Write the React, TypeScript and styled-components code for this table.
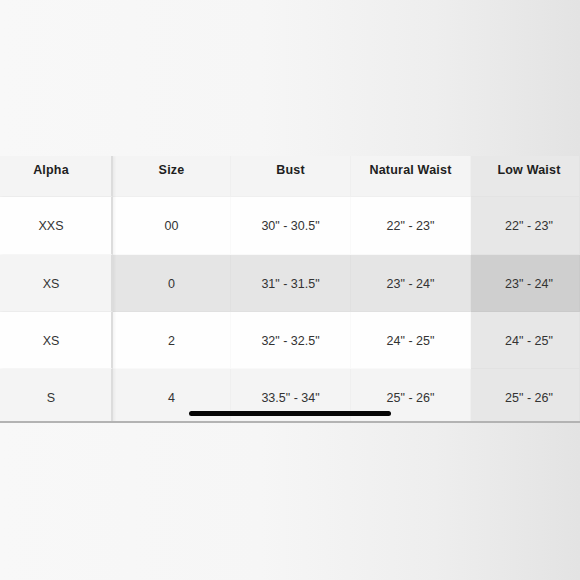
import { createGlobalStyle, styled } from "styled-components";

const GlobalStyle = createGlobalStyle`
  html, body {
    margin: 0;
    padding: 0;
  }
  body {
    font-family: "Liberation Sans", Arial, sans-serif;
  }
`;

const Screen = styled.div`
  width: 580px;
  height: 580px;
  overflow: hidden;
  background: linear-gradient(90deg, #f8f8f8 0%, #f6f6f6 45%, #eeeeee 75%, #e3e3e3 100%);
  padding-top: 156px;
  box-sizing: border-box;
`;

const TableWrap = styled.div`
  position: relative;
  width: 580px;
  height: 265px;
  overflow: hidden;
  border-bottom: 2px solid #b3b3b3;
`;

const Grid = styled.div`
  display: grid;
  grid-template-columns: 113px 118px 120px 120px 109px;
  grid-template-rows: 41px 58px 57px 57px 57px;
`;

type Tone = "head" | "white" | "soft" | "mid" | "lowHead" | "low" | "lowDark";

const tones: Record<Tone, string> = {
  head: "#f4f4f4",
  white: "#fefefe",
  soft: "#f4f4f4",
  mid: "#e5e5e5",
  lowHead: "#e8e8e8",
  low: "#e7e7e7",
  lowDark: "#cfcfcf",
};

const Cell = styled.div<{ $tone: Tone; $first?: boolean; $last?: boolean; $head?: boolean }>`
  display: flex;
  align-items: ${(p) => (p.$head ? "flex-start" : "center")};
  padding-top: ${(p) => (p.$head ? "7px" : "1px")};
  justify-content: center;
  box-sizing: border-box;
  background: ${(p) => tones[p.$tone]};
  color: ${(p) => (p.$head ? "#1e1e1e" : "#333333")};
  font-size: 12.5px;
  font-weight: ${(p) => (p.$head ? 700 : 400)};
  letter-spacing: ${(p) => (p.$head ? "0.2px" : "0")};
  padding-right: ${(p) => (p.$first ? "9px" : "0")};
  padding-left: ${(p) => (p.$last ? "8px" : "0")};
  border-right: ${(p) => (p.$first ? "2px solid #dcdcdc" : "1px solid rgba(0,0,0,0.02)")};
  border-bottom: 1px solid rgba(0, 0, 0, 0.02);
  box-shadow: ${(p) => (p.$first ? "2px 0 2px rgba(0,0,0,0.04)" : "none")};
  position: relative;
  z-index: ${(p) => (p.$first ? 1 : 0)};
`;

const HomeBar = styled.div`
  position: absolute;
  left: 189px;
  top: 255px;
  width: 202px;
  height: 5px;
  border-radius: 3px;
  background: #050505;
  z-index: 2;
`;

const headers = ["Alpha", "Size", "Bust", "Natural Waist", "Low Waist"];

const rows: { cells: string[]; tone: Tone; alphaTone: Tone; lowTone: Tone }[] = [
  { cells: ["XXS", "00", '30" - 30.5"', '22" - 23"', '22" - 23"'], tone: "white", alphaTone: "white", lowTone: "low" },
  { cells: ["XS", "0", '31" - 31.5"', '23" - 24"', '23" - 24"'], tone: "mid", alphaTone: "soft", lowTone: "lowDark" },
  { cells: ["XS", "2", '32" - 32.5"', '24" - 25"', '24" - 25"'], tone: "white", alphaTone: "white", lowTone: "low" },
  { cells: ["S", "4", '33.5" - 34"', '25" - 26"', '25" - 26"'], tone: "soft", alphaTone: "soft", lowTone: "low" },
];

export default function App() {
  return (
    <>
      <GlobalStyle />
      <Screen>
        <TableWrap>
          <Grid>
            {headers.map((h, i) => (
              <Cell
                key={h}
                $head
                $first={i === 0}
                $last={i === 4}
                $tone={i === 4 ? "lowHead" : "head"}
              >
                {h}
              </Cell>
            ))}
            {rows.map((r, ri) =>
              r.cells.map((c, ci) => (
                <Cell
                  key={`${ri}-${ci}`}
                  $first={ci === 0}
                  $last={ci === 4}
                  $tone={ci === 0 ? r.alphaTone : ci === 4 ? r.lowTone : r.tone}
                >
                  {c}
                </Cell>
              ))
            )}
          </Grid>
          <HomeBar />
        </TableWrap>
      </Screen>
    </>
  );
}
